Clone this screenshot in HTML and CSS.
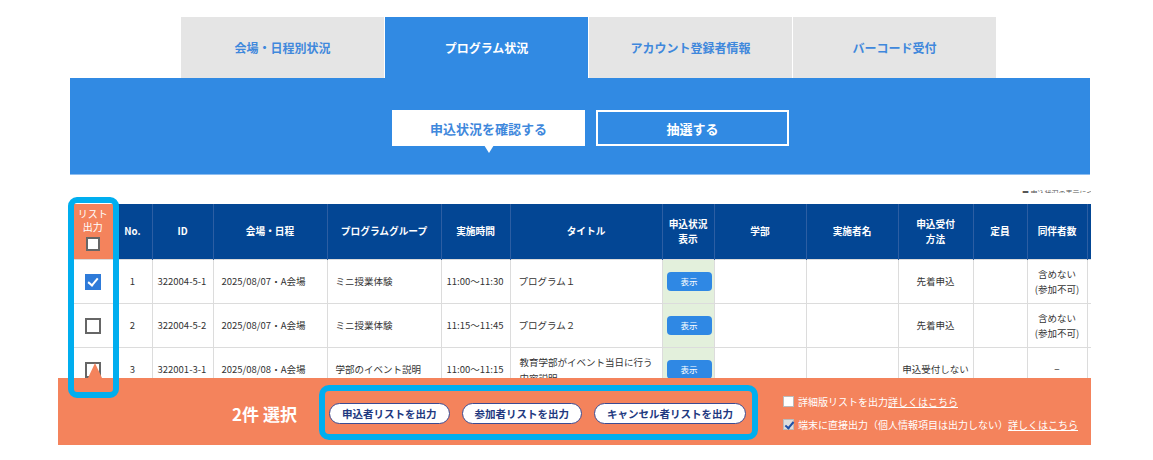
FILE: index.html
```html
<!DOCTYPE html>
<html lang="ja">
<head>
  <meta charset="UTF-8">
  <meta name="viewport" content="width=device-width, initial-scale=1.0">
  <title>プログラム状況</title>
  <link rel="stylesheet" href="styles.css">
</head>
<body>
  <div class="page">
    <!-- タブ -->
    <ul class="tabs">
      <li class="tab">会場・日程別状況</li>
      <li class="tab is-active">プログラム状況</li>
      <li class="tab">アカウント登録者情報</li>
      <li class="tab">バーコード受付</li>
    </ul>

    <!-- サブメニュー -->
    <div class="band">
      <div class="band-buttons">
        <a class="band-btn is-current">申込状況を確認する</a>
        <a class="band-btn">抽選する</a>
      </div>
    </div>

    <div class="note"><span>■ 申込状況の表示について詳しくはこちら</span></div>

    <!-- 一覧 -->
    <div class="table-wrap">
      <table class="prog-table">
        <colgroup>
          <col style="width:40px"><col style="width:39px"><col style="width:61px"><col style="width:114px">
          <col style="width:114px"><col style="width:69px"><col style="width:152px"><col style="width:52px">
          <col style="width:92px"><col style="width:92px"><col style="width:75px"><col style="width:54px">
          <col style="width:60px"><col style="width:4px">
        </colgroup>
        <thead>
          <tr>
            <th class="col-check"><span class="col-label">リスト<br>出力</span><span class="check"></span></th>
            <th>No.</th>
            <th>ID</th>
            <th>会場・日程</th>
            <th>プログラムグループ</th>
            <th>実施時間</th>
            <th>タイトル</th>
            <th>申込状況<br>表示</th>
            <th>学部</th>
            <th>実施者名</th>
            <th>申込受付<br>方法</th>
            <th>定員</th>
            <th>同伴者数</th>
            <th></th>
          </tr>
        </thead>
        <tbody>
          <tr>
            <td class="c"><span class="check is-checked"></span></td>
            <td class="c">1</td>
            <td class="narrow">322004-5-1</td>
            <td>2025/08/07・A会場</td>
            <td>ミニ授業体験</td>
            <td class="narrow">11:00〜11:30</td>
            <td>プログラム１</td>
            <td class="show"><a class="show-btn">表示</a></td>
            <td></td>
            <td></td>
            <td class="c">先着申込</td>
            <td></td>
            <td class="c">含めない<br>(参加不可)</td>
            <td></td>
          </tr>
          <tr>
            <td class="c"><span class="check"></span></td>
            <td class="c">2</td>
            <td class="narrow">322004-5-2</td>
            <td>2025/08/07・A会場</td>
            <td>ミニ授業体験</td>
            <td class="narrow">11:15〜11:45</td>
            <td>プログラム２</td>
            <td class="show"><a class="show-btn">表示</a></td>
            <td></td>
            <td></td>
            <td class="c">先着申込</td>
            <td></td>
            <td class="c">含めない<br>(参加不可)</td>
            <td></td>
          </tr>
          <tr>
            <td class="c"><span class="check"></span></td>
            <td class="c">3</td>
            <td class="narrow">322001-3-1</td>
            <td>2025/08/08・A会場</td>
            <td>学部のイベント説明</td>
            <td class="narrow">11:00〜11:15</td>
            <td class="title">教育学部がイベント当日に行う内容説明</td>
            <td class="show"><a class="show-btn">表示</a></td>
            <td></td>
            <td></td>
            <td class="c">申込受付しない</td>
            <td></td>
            <td class="c">−</td>
            <td></td>
          </tr>
        </tbody>
      </table>
    </div>

    <!-- 選択バー -->
    <div class="select-bar">
      <div class="count">2件 選択</div>
      <div class="export-group">
        <a class="export-btn">申込者リストを出力</a>
        <a class="export-btn">参加者リストを出力</a>
        <a class="export-btn">キャンセル者リストを出力</a>
      </div>
      <div class="options">
        <label class="option"><span class="opt-check"></span>詳細版リストを出力<a class="more">詳しくはこちら</a></label>
        <label class="option"><span class="opt-check is-checked"></span>端末に直接出力（個人情報項目は出力しない）<a class="more">詳しくはこちら</a></label>
      </div>
    </div>

    <!-- 注目枠 -->
    <div class="mark-col"></div>
  </div>
</body>
</html>
```

FILE: styles.css
```css
body {
  margin: 0;
  padding: 0;
  background-color: #fff;
  font-family: "Noto Sans CJK JP", "Noto Sans", sans-serif;
  color: #333;
}

.page {
  position: relative;
  padding-top: 17px;
}

/* タブ */
.tabs {
  display: flex;
  gap: 1px;
  margin: 0 0 0 181px;
  padding: 0;
  list-style: none;
}

.tab {
  width: 203px;
  height: 61px;
  display: flex;
  align-items: center;
  justify-content: center;
  background-color: #e5e5e5;
  color: #3f88dc;
  font-size: 12px;
  font-weight: bold;
}

.tab.is-active {
  background-color: #318ae3;
  color: #fff;
}

/* サブメニュー */
.band {
  margin-left: 70px;
  width: 1020px;
  height: 96px;
  background-color: #318ae3;
  border-bottom: 1px solid #8dbdf0;
  box-sizing: content-box;
}

.band-buttons {
  display: flex;
  gap: 11px;
  padding: 32px 0 0 322px;
}

.band-btn {
  position: relative;
  width: 193px;
  height: 36px;
  box-sizing: border-box;
  display: flex;
  align-items: center;
  justify-content: center;
  border: 2px solid #fff;
  color: #fff;
  font-size: 13px;
  font-weight: bold;
}

.band-btn.is-current {
  background-color: #fff;
  color: #3f88dc;
}

.band-btn.is-current::after {
  content: "";
  position: absolute;
  left: 50%;
  bottom: -9px;
  margin-left: -5px;
  border-left: 5px solid transparent;
  border-right: 5px solid transparent;
  border-top: 8px solid #fff;
}

.note {
  height: 29px;
  margin-left: 73px;
  width: 1018px;
  display: flex;
  justify-content: flex-end;
}

.note span {
  margin-top: 15px;
  height: 3px;
  overflow: hidden;
  font-size: 7px;
  line-height: 7px;
  color: #555;
  white-space: nowrap;
  width: 69px;
}

/* 一覧 */
.table-wrap {
  margin-left: 73px;
  width: 1018px;
  height: 174px;
  overflow: hidden;
}

.prog-table {
  width: 1018px;
  table-layout: fixed;
  border-collapse: collapse;
  font-size: 9.5px;
}

.prog-table th {
  height: 55px;
  padding: 0;
  background-color: #034694;
  border-left: 1px solid #2c5ea3;
  color: #fff;
  font-size: 9.7px;
  font-weight: bold;
  line-height: 15px;
  text-align: center;
  overflow: hidden;
}

.prog-table th:first-child {
  border-left: none;
}

.prog-table th.col-check {
  vertical-align: top;
  background-color: #f4835c;
  font-weight: normal;
  font-size: 10px;
  line-height: 13px;
}

.col-label {
  display: block;
  margin-top: 3px;
}

.prog-table th.col-check .check {
  display: block;
  margin: 4px auto 0;
  width: 14px;
  height: 14px;
}

.prog-table td {
  height: 43px;
  padding: 0 6px 0 8px;
  border: 1px solid #dcdcdc;
  line-height: 15px;
  white-space: nowrap;
}

.prog-table td:first-child {
  border-left: none;
}

.prog-table td.c {
  text-align: center;
  padding: 0 2px;
}

.prog-table td.narrow {
  padding: 0 2px 0 5px;
}

.prog-table td.title {
  white-space: normal;
  padding: 0 4px 0 9px;
  line-height: 16px;
}

.prog-table td.show {
  background-color: #e3f0dc;
  padding: 0 3px 0 4px;
}

.show-btn {
  display: flex;
  align-items: center;
  justify-content: center;
  width: 45px;
  height: 19px;
  border-radius: 4px;
  background-color: #2f88e4;
  color: #fff;
  font-size: 8.5px;
}

.check {
  display: inline-block;
  vertical-align: middle;
  width: 16px;
  height: 16px;
  box-sizing: border-box;
  border: 2px solid #666;
  background-color: #fff;
}

.check.is-checked {
  position: relative;
  border: none;
  background-color: #2e7bd9;
}

.check.is-checked::after {
  content: "";
  position: absolute;
  left: 5px;
  top: 2px;
  width: 4px;
  height: 8px;
  border-right: 2px solid #fff;
  border-bottom: 2px solid #fff;
  transform: rotate(40deg);
}

/* 選択バー */
.select-bar {
  position: relative;
  margin-left: 58px;
  width: 1033px;
  height: 67px;
  display: flex;
  align-items: center;
  background-color: #f4835c;
  color: #fff;
}

.select-bar::before {
  content: "";
  position: absolute;
  left: 30px;
  top: -15px;
  border-left: 7px solid transparent;
  border-right: 7px solid transparent;
  border-bottom: 15px solid #f4835c;
}

.count {
  margin-left: 174px;
  width: 87px;
  font-size: 17px;
  font-weight: bold;
  padding-top: 3px;
}

.export-group {
  display: flex;
  align-items: center;
  gap: 12px;
  height: 55px;
  box-sizing: border-box;
  margin-top: 1px;
  padding: 2px 6px 0 4px;
  border: 6px solid #00aeef;
  border-radius: 10px;
}

.export-btn {
  height: 21px;
  box-sizing: border-box;
  padding: 0 12px;
  display: flex;
  align-items: center;
  border: 1px solid #3b4c94;
  border-radius: 11px;
  background-color: #fff;
  color: #22397f;
  font-size: 10.5px;
  font-weight: bold;
}

.options {
  display: flex;
  flex-direction: column;
  gap: 10px;
  margin-left: 25px;
  padding-top: 3px;
  font-size: 10px;
}

.option {
  display: flex;
  align-items: center;
  height: 13px;
  white-space: nowrap;
}

.opt-check {
  position: relative;
  width: 11px;
  height: 11px;
  box-sizing: border-box;
  margin-right: 4px;
  border: 1px solid #bbb;
  background-color: #fff;
}

.opt-check.is-checked {
  background-color: #ddd;
}

.opt-check.is-checked::after {
  content: "";
  position: absolute;
  left: 3px;
  top: 0;
  width: 3px;
  height: 7px;
  border-right: 2px solid #1f4fa8;
  border-bottom: 2px solid #1f4fa8;
  transform: rotate(40deg);
}

.more {
  color: #fff;
  text-decoration: underline;
}

/* 注目枠 */
.mark-col {
  position: absolute;
  left: 68px;
  top: 197px;
  width: 51px;
  height: 201px;
  box-sizing: border-box;
  border: 6px solid #00aeef;
  border-radius: 9px;
}
```
